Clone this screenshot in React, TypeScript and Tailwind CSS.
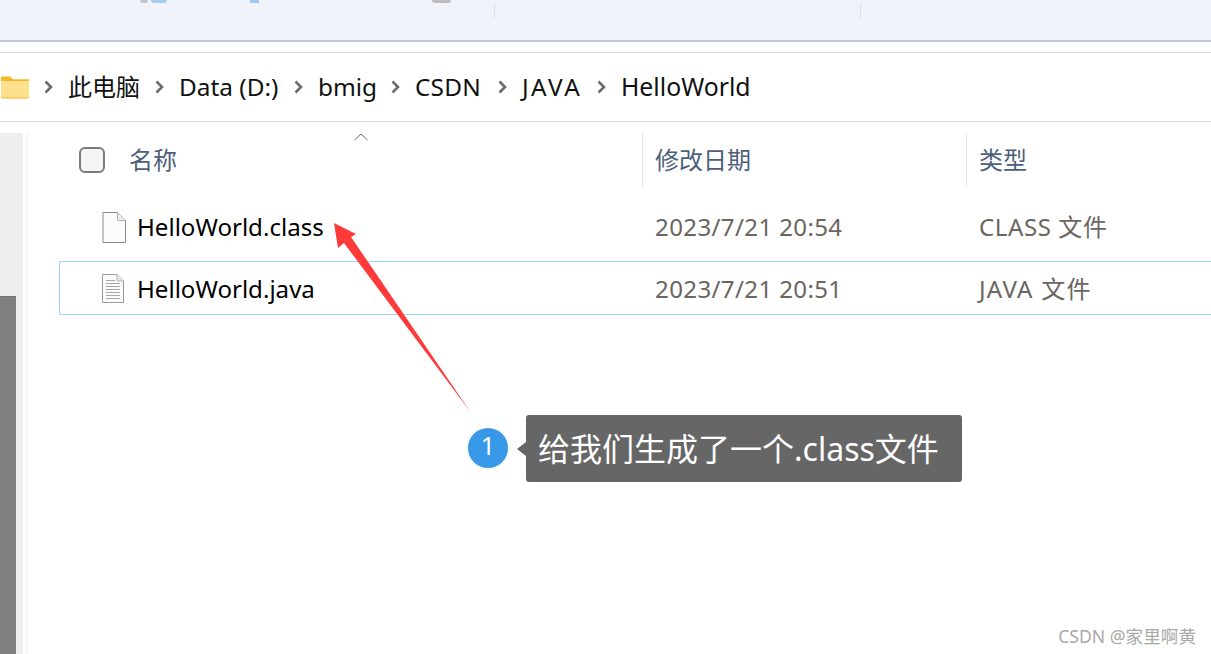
const font = "[font-family:'Noto_Sans','Noto_Sans_CJK_SC',sans-serif]";

function Chevron() {
  return (
    <svg width="9" height="14" viewBox="0 0 9 14" className="shrink-0">
      <path d="M1.5 1.5 L7 7 L1.5 12.5" fill="none" stroke="#6b6b6b" strokeWidth="2.6" />
    </svg>
  );
}

function Folder() {
  return (
    <svg width="29" height="24" viewBox="0 0 29 24" className="shrink-0">
      <path d="M1 2.5 Q1 1.5 2 1.5 H10 L13 4.5 H29 V8 H1 Z" fill="#f6b818" />
      <rect x="1" y="4.5" width="28" height="19" rx="1" fill="#f3b62c" />
      <rect x="1" y="6" width="28" height="16.5" fill="#fee08d" />
    </svg>
  );
}

function BlankFile() {
  return (
    <svg width="24" height="31" viewBox="0 0 24 31">
      <path d="M1 .5 H15.5 L23.5 8.5 V30.5 H1 Z" fill="#fbfbfb" stroke="#8a8a8a" />
      <path d="M15.5 .5 V8.5 H23.5" fill="#ececec" stroke="#b5b5b5" />
    </svg>
  );
}

function TextFile() {
  return (
    <svg width="22" height="29" viewBox="0 0 22 29">
      <path d="M.5 .5 H15 L21.5 7 V28.5 H.5 Z" fill="#fbfbfb" stroke="#999" />
      <path d="M15 .5 V7 H21.5" fill="#e6e6e6" stroke="#b5b5b5" />
      <path d="M4 6.5 H13 M4 9.5 H18 M4 12.5 H18 M4 15.5 H18 M4 18.5 H18 M4 21.5 H18 M4 24.5 H18" stroke="#a8a8a8" />
    </svg>
  );
}

const crumbs = [
  { label: "此电脑", cls: "w-[72px] text-[24px]" },
  { label: "Data (D:)", cls: "w-[100px]" },
  { label: "bmig", cls: "w-[58px]" },
  { label: "CSDN", cls: "w-[68px] tracking-[0.2px]" },
  { label: "JAVA", cls: "w-[60px] tracking-[2.4px]" },
  { label: "HelloWorld", cls: "text-[24.8px]" },
];

function HeaderCell({ label, className }: { label: string; className: string }) {
  return (
    <div className={`flex items-center text-[24px] text-[#4c607a] ${className}`}>{label}</div>
  );
}

export default function App() {
  return (
    <div className={`relative h-[654px] w-[1211px] overflow-hidden bg-white ${font}`}>
      {/* toolbar remnant */}
      <div className="relative h-[42px] border-b-2 border-[#bfcbd9] bg-[#f0f3f9]">
        <div className="flex h-[3px]">
          <div className="ml-[140px] h-[3px] w-[8px] rounded-b bg-[#c4c4c4]" />
          <div className="ml-[3px] h-[3px] w-[16px] rounded-b bg-[#a5cdf0]" />
          <div className="ml-[83px] h-[3px] w-[9px] bg-[#9cc9f0]" />
          <div className="ml-[173px] h-[3px] w-[19px] rounded-b bg-[#bdbdbd]" />
        </div>
        <div className="flex">
          <div className="ml-[494px] h-[15px] w-[1px] bg-[#dde1e6]" />
          <div className="ml-[365px] h-[15px] w-[1px] bg-[#dde1e6]" />
        </div>
      </div>

      <div className="h-[10px]" />

      {/* address bar */}
      <div className="flex h-[70px] items-center border-y border-[#dcdcdc] text-[24.4px] whitespace-nowrap text-[#111]">
        <Folder />
        {crumbs.map((c) => (
          <div key={c.label} className="flex items-center">
            <div className="mx-[15px]"><Chevron /></div>
            <span className={c.cls}>{c.label}</span>
          </div>
        ))}
      </div>

      {/* body */}
      <div className="flex h-[532px]">
        {/* nav scrollbar */}
        <div className="mt-[11px] flex w-[23px] flex-col justify-end bg-[#efefef]">
          <div className="h-[358px] w-[16px] border-t border-[#777] bg-[#808080]" />
        </div>
        <div className="mt-[11px] ml-[3px] w-[2px] bg-[#f6f6f6]" />

        {/* file list */}
        <div className="relative flex-1 pt-[11px]">
          <div className="flex h-[54px]">
            <div className="ml-[51px] flex w-[50px] items-center">
              <div className="h-[26px] w-[26px] rounded-[6px] border-2 border-[#7b7b7b] bg-[#f4f4f4]" />
            </div>
            <HeaderCell label="名称" className="w-[513px]" />
            <div className="h-[54px] w-[1px] bg-[#e4e4e4]" />
            <HeaderCell label="修改日期" className="w-[323px] pl-[12px]" />
            <div className="h-[54px] w-[1px] bg-[#e4e4e4]" />
            <HeaderCell label="类型" className="pl-[12px]" />
          </div>

          <div className="mt-[13px] flex h-[54px] items-center pl-[74px]">
            <div className="flex w-[35px]"><BlankFile /></div>
            <span className="w-[518px] pt-[1px] text-[24.1px] text-black">HelloWorld.class</span>
            <span className="w-[324px] pt-[1px] text-[24.1px] tracking-[0.35px] text-[#6b6560]">2023/7/21 20:54</span>
            <span className="pt-[1px] text-[24.1px] tracking-[0.55px] text-[#6b6560]">CLASS 文件</span>
          </div>

          <div className="mt-[7px] ml-[31px] flex h-[54px] items-center rounded-l-[2px] border-y border-l border-[#99d1ff] pl-[42px]">
            <div className="flex w-[35px]"><TextFile /></div>
            <span className="w-[518px] pt-[2px] text-[24.1px] text-black">HelloWorld.java</span>
            <span className="w-[324px] pt-[2px] text-[24.1px] tracking-[0.35px] text-[#6b6560]">2023/7/21 20:51</span>
            <span className="pt-[2px] text-[24.1px] tracking-[1.2px] text-[#6b6560]">JAVA 文件</span>
          </div>
        </div>
      </div>

      {/* sort caret */}
      <svg width="14" height="8" viewBox="0 0 14 8" className="absolute left-[354px] top-[133px]">
        <path d="M.5 7 L7 1 L13.5 7" fill="none" stroke="#666" />
      </svg>

      {/* annotation arrow */}
      <svg width="150" height="200" viewBox="330 218 150 200" className="absolute left-[330px] top-[218px]">
        <path d="M334 223 L356 234 L351 237 L470.5 412 L344 243 L338 248 Z" fill="#fe3a3a" />
      </svg>

      {/* annotation badge */}
      <div className="absolute left-[468px] top-[428px] flex h-[40px] w-[40px] items-center justify-center rounded-full bg-[#3898e8] pb-[4px] text-[25px] text-white">
        1
      </div>
      <div className="absolute left-[517px] top-[442px] h-0 w-0 border-y-[7px] border-r-[9px] border-y-transparent border-r-[#666]" />
      <div className="absolute left-[526px] top-[415px] flex h-[67px] w-[436px] items-center rounded-[3px] bg-[#666] pl-[12px] text-[32px] whitespace-nowrap text-white">
        给我们生成了一个.class文件
      </div>

      {/* watermark */}
      <div className="absolute right-[15px] top-[625px] text-[17.6px] leading-[22px] text-[#a9a9a9]">
        CSDN @家里啊黄
      </div>
    </div>
  );
}
